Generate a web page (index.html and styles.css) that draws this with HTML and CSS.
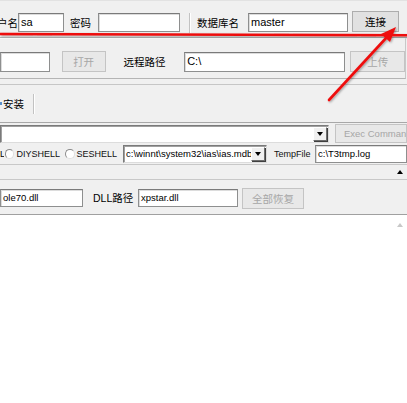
FILE: index.html
```html
<!DOCTYPE html>
<html>
<head>
<meta charset="utf-8">
<link rel="stylesheet" href="styles.css">
</head>
<body>
<div class="win">
  <div class="grp1">
    <div class="row r1">
      <span class="lbl w18 endal">户名</span>
      <div class="inp w46 big">sa</div>
      <span class="lbl ml6 w28">密码</span>
      <div class="inp w82 big"></div>
      <span class="vsep ml9"></span>
      <span class="lbl ml6 w51">数据库名</span>
      <div class="inp w100 big">master</div>
      <div class="btn ml4 w47 up">连接</div>
    </div>
  </div>
  <div class="grp2">
    <div class="row r2">
      <div class="inp w50 h20"></div>
      <div class="btn dis ml12 w44">打开</div>
      <span class="lbl ml18 w61">远程路径</span>
      <div class="inp w162 h20 big">C:\</div>
      <div class="btn dis ml5 w55">上传</div>
    </div>
  </div>
  <div class="toolbar">
    <span class="icofrag"></span>
    <span class="lbl tb">安装</span>
    <span class="vsep tbsep"></span>
  </div>
  <div class="row r3">
    <div class="combo w329"><span class="ddb"><span class="dn"></span></span></div>
    <div class="btn dis ml6 w72 exec">Exec Command</div>
  </div>
  <div class="row r4">
    <span class="tiny">L</span>
    <span class="radio"></span>
    <span class="opt">DIYSHELL</span>
    <span class="radio ml5"></span>
    <span class="opt">SESHELL</span>
    <div class="combo w144 ml6 sm"><span class="txt">c:\winnt\system32\ias\ias.mdb</span><span class="ddb"><span class="dn"></span></span></div>
    <span class="opt ml7 w43">TempFile</span>
    <div class="inp w92 sm">c:\T3tmp.log</div>
  </div>
  <div class="strip"><span class="upar"></span></div>
  <div class="row r5">
    <div class="inp w83 sm">ole70.dll</div>
    <span class="lbl ml10 w45"><span class="lat">DLL</span>路径</span>
    <div class="inp w100 sm">xpstar.dll</div>
    <div class="btn dis ml4 w62">全部恢复</div>
  </div>
  <div class="bottom"><span class="upar faint"></span></div>
</div>
<svg class="anno" width="407" height="403" viewBox="0 0 407 403">
  <defs>
    <filter id="sh" x="-10%" y="-10%" width="120%" height="120%">
      <feDropShadow dx="1" dy="1" stdDeviation="0.8" flood-color="#000" flood-opacity="0.35"/>
    </filter>
  </defs>
  <g filter="url(#sh)">
    <line x1="0" y1="34" x2="407" y2="35.2" stroke="#ee1111" stroke-width="2.6"/>
    <line x1="329" y1="100" x2="387" y2="37" stroke="#ee1111" stroke-width="2.6" stroke-linecap="round"/>
    <polygon points="396,27 390,42 381,34" fill="#ee1111"/>
  </g>
</svg>
</body>
</html>
```
FILE: styles.css
```css
html, body {
  margin: 0;
  padding: 0;
}
body {
  width: 407px;
  height: 403px;
  overflow: hidden;
  background: #f0f0f0;
  font-family: "Noto Sans CJK SC", "Liberation Sans", sans-serif;
  font-size: 10.5px;
  color: #000;
  position: relative;
}
.win {
  width: 407px;
  height: 403px;
  display: flex;
  flex-direction: column;
}
.row {
  display: flex;
  align-items: center;
}
.grp1 {
  height: 38px;
  box-sizing: border-box;
  border-top: 1px solid #e2e2e2;
  border-bottom: 1px solid #b4b4b4;
}
.r1 {
  padding-top: 12px;
  height: 19px;
}
.grp2 {
  height: 41px;
  box-sizing: border-box;
  border-top: 1px solid #fafafa;
  border-bottom: 1px solid #b4b4b4;
  border-right: 1px solid #c8c8c8;
  margin-right: 1px;
}
.r2 {
  padding-top: 12px;
  height: 21px;
}
.toolbar {
  margin-top: 5px;
  height: 39px;
  box-sizing: border-box;
  border-top: 1px solid #c6c6c6;
  border-bottom: 1px solid #a8a8a8;
  display: flex;
  align-items: center;
  position: relative;
}
.icofrag {
  width: 2px;
  height: 3px;
  background: #5b8fc9;
  margin-right: 1px;
}
.tb {
  margin-left: 0;
}
.tbsep {
  margin-left: 9px;
  height: 19px;
}
.r3 {
  height: 19px;
  margin-top: 1px;
}
.r4 {
  height: 19px;
  margin-top: 1px;
}
.strip {
  margin-top: 1px;
  height: 16px;
  box-sizing: border-box;
  border-top: 1px solid #c8c8c8;
  border-bottom: 1px solid #c8c8c8;
  display: flex;
  justify-content: flex-end;
  align-items: center;
  padding-right: 4px;
}
.upar {
  width: 0;
  height: 0;
  border-left: 3px solid transparent;
  border-right: 3px solid transparent;
  border-bottom: 4px solid #000;
}
.r5 {
  margin-top: 8px;
  height: 20px;
}
.bottom {
  margin-top: 6px;
  flex: 1;
  background: #fff;
  border-top: 1px solid #a0a0a0;
  display: flex;
  justify-content: flex-end;
  align-items: flex-start;
  padding: 8px 4px 0 0;
}
.faint {
  border-bottom-color: #c8c8c8;
}
.lbl {
  white-space: nowrap;
  line-height: 14px;
}
.endal {
  display: flex;
  justify-content: flex-end;
  flex: none;
}
.lat {
  font-family: "Liberation Sans", sans-serif;
  font-size: 10.5px;
}
.inp {
  box-sizing: border-box;
  height: 19px;
  background: #fff;
  border: 1px solid #8e8f8f;
  border-top-color: #7a7a7a;
  box-shadow: inset 1px 1px 0 #dcdcdc;
  font-family: "Liberation Sans", sans-serif;
  font-size: 9.5px;
  line-height: 16px;
  padding-left: 2px;
  white-space: nowrap;
  overflow: hidden;
}
.inp.big {
  font-size: 11px;
}
.inp.h20 {
  height: 20px;
  line-height: 17px;
}
.inp.sm {
  height: 18px;
  line-height: 16px;
}
.btn {
  box-sizing: border-box;
  height: 21px;
  background: #e1e1e1;
  border: 1px solid #adadad;
  display: flex;
  align-items: center;
  justify-content: center;
  white-space: nowrap;
  overflow: hidden;
}
.btn.up {
  margin-top: -3px;
}
.btn.dis {
  color: #a6a6a6;
  background: #e8e8e8;
  border-color: #c4c4c4;
}
.exec {
  font-family: "Liberation Sans", sans-serif;
  font-size: 9.5px;
  height: 19px;
  justify-content: flex-start;
  padding-left: 8px;
}
.vsep {
  width: 1px;
  height: 20px;
  background: #c2c2c2;
  border-right: 1px solid #fff;
}
.combo {
  box-sizing: border-box;
  height: 18px;
  background: #fff;
  border: 1px solid #7a7a7a;
  border-right-color: #dcdcdc;
  border-bottom-color: #dcdcdc;
  box-shadow: inset 1px 1px 0 #a0a0a0;
  display: flex;
  align-items: center;
  justify-content: space-between;
  padding: 0 1px 0 2px;
  font-family: "Liberation Sans", sans-serif;
  font-size: 9.5px;
}
.combo .txt {
  white-space: nowrap;
  overflow: hidden;
}
.ddb {
  box-sizing: border-box;
  width: 14px;
  height: 14px;
  margin-left: auto;
  flex: none;
  background: #f0f0f0;
  border: 1px solid #fff;
  border-right-color: #6e6e6e;
  border-bottom-color: #6e6e6e;
  box-shadow: 1px 1px 0 #404040;
  display: flex;
  align-items: center;
  justify-content: center;
}
.dn {
  width: 0;
  height: 0;
  border-left: 3px solid transparent;
  border-right: 3px solid transparent;
  border-top: 4px solid #000;
}
.tiny {
  font-family: "Liberation Sans", sans-serif;
  font-size: 9px;
  width: 4px;
  overflow: hidden;
}
.radio {
  box-sizing: border-box;
  width: 10px;
  height: 10px;
  border-radius: 50%;
  background: #fff;
  border: 1px solid #8a8a8a;
  border-right-color: #e0e0e0;
  border-bottom-color: #e0e0e0;
  margin-left: 1px;
  margin-right: 2px;
}
.opt {
  font-family: "Liberation Sans", sans-serif;
  font-size: 9px;
  white-space: nowrap;
  color: #111;
}
.anno {
  position: absolute;
  left: 0;
  top: 0;
  pointer-events: none;
}
.ml4 { margin-left: 4px; }
.ml5 { margin-left: 5px; }
.ml6 { margin-left: 6px; }
.ml7 { margin-left: 7px; }
.ml9 { margin-left: 9px; }
.ml10 { margin-left: 10px; }
.ml12 { margin-left: 12px; }
.ml18 { margin-left: 18px; }
.w18 { width: 18px; }
.w28 { width: 28px; }
.w43 { width: 43px; }
.w44 { width: 44px; }
.w45 { width: 45px; }
.w46 { width: 46px; }
.w47 { width: 47px; }
.w50 { width: 50px; }
.w51 { width: 51px; }
.w55 { width: 55px; }
.w61 { width: 61px; }
.w62 { width: 62px; }
.w72 { width: 72px; flex: none; }
.w82 { width: 82px; }
.w83 { width: 83px; }
.w92 { width: 92px; flex: none; }
.w100 { width: 100px; }
.w144 { width: 144px; flex: none; }
.w162 { width: 162px; }
.w329 { width: 329px; flex: none; }
```
